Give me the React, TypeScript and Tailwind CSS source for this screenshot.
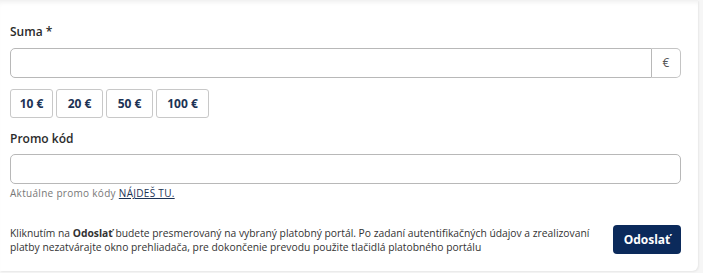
import React, { useState } from 'react';

const amounts = [10, 20, 50, 100];

const App: React.FC = () => {
  const [sum, setSum] = useState<string>('');
  const [promo, setPromo] = useState<string>('');

  return (
    <div className="min-h-[273px] bg-[#f6f6f6] font-['Open_Sans',sans-serif] text-[#333]">
      <div className="w-[698px] h-[271px] bg-white rounded-br-md shadow-[inset_0_5px_5px_-3px_rgba(0,0,0,0.07),1px_1px_2px_rgba(0,0,0,0.06)] px-[10px] pt-[24px]">
        {/* Suma */}
        <label className="block text-[12px] font-semibold leading-[16px] text-[#2b2b2b] mb-[8px]">Suma *</label>
        <div className="flex w-[671px] h-[30px]">
          <input
            value={sum}
            onChange={(e) => setSum(e.target.value)}
            className="flex-1 border border-[#b8b8b8] rounded-l-[5px] outline-none px-2 text-[12px]"
          />
          <div className="w-[29px] flex items-center justify-center border border-l-0 border-[#c4c4c4] rounded-r-[5px] text-[12px] text-[#555]">
            €
          </div>
        </div>

        {/* rýchle sumy */}
        <div className="flex gap-[3px] mt-[11px]">
          {amounts.map((a) => (
            <button
              key={a}
              onClick={() => setSum(String(a))}
              className={`h-[29px] border border-[#c8c8c8] rounded-[3px] text-[12px] font-bold text-[#1c3355] ${a === 10 ? 'w-[43px]' : a === 100 ? 'w-[53px]' : 'w-[47px]'}`}
            >
              {a} €
            </button>
          ))}
        </div>

        {/* Promo */}
        <label className="block text-[12px] font-semibold leading-[16px] text-[#2b2b2b] mt-[13px] mb-[7px]">Promo kód</label>
        <input
          value={promo}
          onChange={(e) => setPromo(e.target.value)}
          className="block w-[671px] h-[30px] border border-[#b8b8b8] rounded-[5px] outline-none px-2 text-[12px]"
        />
        <p className="text-[10px] leading-[12px] tracking-[0.3px] text-[#777] mt-[3px]">
          Aktuálne promo kódy{' '}
          <a href="#" className="text-[#1c3355] underline">NÁJDEŠ TU.</a>
        </p>

        {/* potvrdenie */}
        <div className="flex items-center justify-between mt-[26px] w-[671px]">
          <p className="text-[10.3px] leading-[14px] text-[#333] w-[600px]">
            Kliknutím na <span className="font-bold">Odoslať</span> budete presmerovaný na vybraný platobný portál. Po zadaní autentifikačných údajov a zrealizovaní platby nezatvárajte okno prehliadača, pre dokončenie prevodu použite tlačidlá platobného portálu
          </p>
          <button className="w-[68px] h-[29px] bg-[#0b2a5b] text-white text-[12px] font-bold rounded-[4px]">
            Odoslať
          </button>
        </div>
      </div>
    </div>
  );
};

export default App;
